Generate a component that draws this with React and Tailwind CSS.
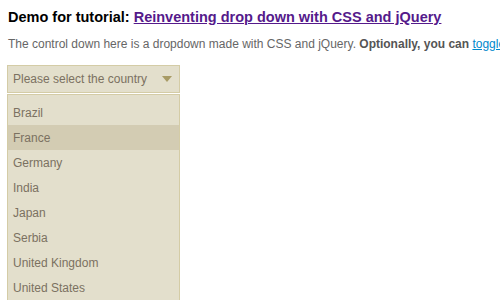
import React from "react";

const countries = ["Brazil", "France", "Germany", "India", "Japan", "Serbia", "United Kingdom", "United States"];

export default function App() {
  return (
    <div className="w-[500px] h-[300px] overflow-hidden bg-white px-[8px] pt-[8px]" style={{ fontFamily: '"Liberation Sans", Arial, sans-serif' }}>
      <h1 className="text-[14.5px] font-bold text-black leading-[18px] whitespace-nowrap">
        Demo for tutorial: <a className="text-[#551a8b] underline">Reinventing drop down with CSS and jQuery</a>
      </h1>
      <p className="mt-[11px] text-[12px] leading-[14px] text-[#666] whitespace-nowrap">
        The control down here is a dropdown made with CSS and jQuery. <b className="text-[#555]">Optionally, you can <a className="text-[#0088cc] underline font-normal">toggle</a></b>
      </p>
      <div className="mt-[14px] ml-[-1px] w-[173px]">
        <div className="h-[28px] border border-[#d4cca6] bg-[#e3dfcc] flex items-center justify-between pl-[5px] pr-[7px]">
          <span className="text-[12px] text-[#7b7161]">Please select the country</span>
          <svg width="10" height="6" viewBox="0 0 10 6"><path d="M0 0h10L5 6z" fill="#a89b65" /></svg>
        </div>
        <ul className="mt-[1px] border border-[#d4cca6] bg-[#e3dfcc] pt-[5px]">
          {countries.map((c) => (
            <li key={c} className={`h-[25px] flex items-center pl-[5px] text-[12px] text-[#7b7161] ${c === "France" ? "bg-[#d3ccb3] text-[#5f553f]" : ""}`}>{c}</li>
          ))}
        </ul>
      </div>
    </div>
  );
}
